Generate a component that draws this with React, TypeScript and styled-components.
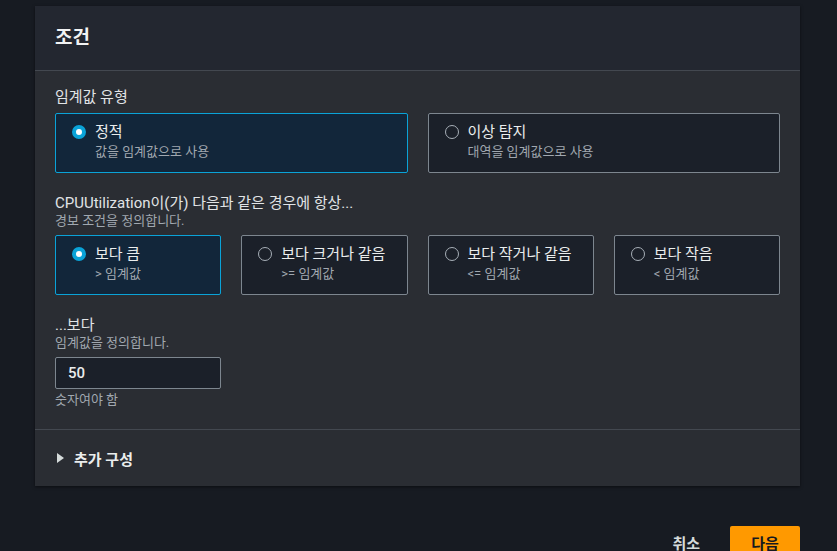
import { FC } from "react"
import styled, { createGlobalStyle } from "styled-components"

const GlobalStyle = createGlobalStyle`
  html, body {
    margin: 0;
    padding: 0;
    background: #171b22;
    font-family: Roboto, "Noto Sans CJK KR", sans-serif;
    color: #d5dbdb;
  }
`

const Page = styled.div`
  width: 837px;
  height: 551px;
  overflow: hidden;
  padding: 6px 37px 0 35px;
  box-sizing: border-box;
`

const Panel = styled.section`
  width: 765px;
  background: #2a2d33;
  box-shadow: 0 1px 3px rgba(0, 0, 0, 0.5);
`

const PanelHeader = styled.header`
  height: 65px;
  box-sizing: border-box;
  background: #232730;
  border-bottom: 1px solid #434850;
  padding: 0 20px 5px;
  display: flex;
  align-items: center;
`

const Title = styled.h2`
  margin: 0;
  font-size: 19px;
  font-weight: 700;
  color: #f2f3f3;
`

const PanelBody = styled.div`
  padding: 16px 20px 21px;
  display: flex;
  flex-direction: column;
  gap: 20px;
`

const Field = styled.div`
  display: flex;
  flex-direction: column;
`

const Label = styled.div`
  font-size: 15px;
  line-height: 20px;
  color: #e1e4e6;
`

const Description = styled.div`
  font-size: 13px;
  line-height: 16px;
  color: #a1a8b0;
`

const TileGrid = styled.div<{ cols: number }>`
  display: grid;
  grid-template-columns: repeat(${(p) => p.cols}, 1fr);
  gap: 20px;
  margin-top: 6px;
`

const Tile = styled.div<{ selected?: boolean }>`
  height: 60px;
  box-sizing: border-box;
  border: 1px solid ${(p) => (p.selected ? "#0aa3d8" : "#7d868f")};
  background: ${(p) => (p.selected ? "#12263a" : "#1b2029")};
  border-radius: 2px;
  padding: 8px 16px;
  display: flex;
  gap: 9px;
`

const Radio = styled.span<{ checked?: boolean }>`
  width: 14px;
  height: 14px;
  box-sizing: border-box;
  border-radius: 50%;
  margin-top: 3px;
  flex: none;
  border: ${(p) => (p.checked ? "4px solid #0aa3d8" : "1.5px solid #a7afb7")};
  background: ${(p) => (p.checked ? "#ffffff" : "transparent")};
`

const TileText = styled.div`
  display: flex;
  flex-direction: column;
`

const TileTitle = styled.div`
  font-size: 15px;
  line-height: 20px;
  color: #eaeded;
`

const TileDesc = styled.div`
  font-size: 13px;
  line-height: 20px;
  color: #a1a8b0;
`

const Input = styled.div`
  width: 166px;
  height: 32px;
  box-sizing: border-box;
  margin-top: 6px;
  border: 1px solid #7d868f;
  background: #1b2029;
  border-radius: 2px;
  padding: 0 12px;
  display: flex;
  align-items: center;
  font-size: 15px;
  font-weight: 500;
  color: #eaeded;
`

const Constraint = styled(Description)`
  margin-top: 3px;
`

const Expander = styled.div`
  border-top: 1px solid #434850;
  height: 57px;
  box-sizing: border-box;
  padding: 0 22px;
  display: flex;
  align-items: center;
  gap: 10px;
  font-size: 15px;
  font-weight: 700;
  color: #eaeded;
`

const Caret = styled.span`
  width: 0;
  height: 0;
  border-top: 5px solid transparent;
  border-bottom: 5px solid transparent;
  border-left: 7px solid #d5dbdb;
`

const Actions = styled.div`
  display: flex;
  justify-content: flex-end;
  align-items: center;
  gap: 30px;
  margin-top: 40px;
`

const LinkButton = styled.span`
  font-size: 15px;
  font-weight: 700;
  color: #d5dbdb;
`

const PrimaryButton = styled.span`
  width: 70px;
  height: 32px;
  border-radius: 2px;
  background: #ff9900;
  color: #16191f;
  font-size: 15px;
  font-weight: 700;
  display: flex;
  align-items: center;
  justify-content: center;
`

type Option = { title: string; desc: string; selected?: boolean }

const TileGroup: FC<{ options: Option[] }> = ({ options }) => (
  <TileGrid cols={options.length}>
    {options.map((o) => (
      <Tile key={o.title} selected={o.selected}>
        <Radio checked={o.selected} />
        <TileText>
          <TileTitle>{o.title}</TileTitle>
          <TileDesc>{o.desc}</TileDesc>
        </TileText>
      </Tile>
    ))}
  </TileGrid>
)

const thresholdTypes: Option[] = [
  { title: "정적", desc: "값을 임계값으로 사용", selected: true },
  { title: "이상 탐지", desc: "대역을 임계값으로 사용" },
]

const comparisons: Option[] = [
  { title: "보다 큼", desc: "> 임계값", selected: true },
  { title: "보다 크거나 같음", desc: ">= 임계값" },
  { title: "보다 작거나 같음", desc: "<= 임계값" },
  { title: "보다 작음", desc: "< 임계값" },
]

export default function App() {
  return (
    <>
      <GlobalStyle />
      <Page>
        <Panel>
          <PanelHeader>
            <Title>조건</Title>
          </PanelHeader>
          <PanelBody>
            <Field>
              <Label>임계값 유형</Label>
              <TileGroup options={thresholdTypes} />
            </Field>
            <Field>
              <Label>CPUUtilization이(가) 다음과 같은 경우에 항상...</Label>
              <Description>경보 조건을 정의합니다.</Description>
              <TileGroup options={comparisons} />
            </Field>
            <Field>
              <Label>...보다</Label>
              <Description>임계값을 정의합니다.</Description>
              <Input>50</Input>
              <Constraint>숫자여야 함</Constraint>
            </Field>
          </PanelBody>
          <Expander>
            <Caret />
            추가 구성
          </Expander>
        </Panel>
        <Actions>
          <LinkButton>취소</LinkButton>
          <PrimaryButton>다음</PrimaryButton>
        </Actions>
      </Page>
    </>
  )
}
